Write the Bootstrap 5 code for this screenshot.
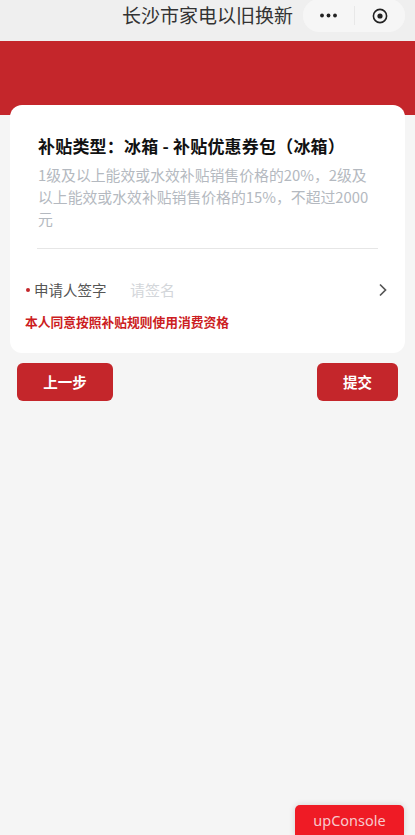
<!DOCTYPE html>
<html lang="zh">
<head>
<meta charset="utf-8">
<link href="https://cdn.jsdelivr.net/npm/bootstrap@5.3.0/dist/css/bootstrap.min.css" rel="stylesheet">
<style>
html,body{height:100%;}
body{background:#f5f5f5;font-family:"Noto Sans CJK SC","Liberation Sans",sans-serif;overflow:hidden;}
.page-wrap{height:835px;position:relative;overflow:hidden;}
.top-nav{height:41px;background:#efefef;}
.nav-title{font-size:19px;line-height:30px;color:#333;padding-left:122px;font-weight:400;white-space:nowrap;}
.capsule{width:102px;height:33px;border-radius:16px;background:#f6f6f6;margin-right:10px;margin-top:-1px;}
.capsule-half{width:50%;height:100%;}
.capsule-line{width:1px;height:19px;background:#e8e8e8;}
.hero{height:74px;background:#c4262b;}
.form-card{margin:-10px 10px 0;background:#fff;border-radius:12px;height:248px;position:relative;padding:24px 27px 0;}
.form-title{font-size:17px;line-height:34px;font-weight:700;color:#111;white-space:nowrap;padding-left:1px;letter-spacing:.2px;}
.form-desc{font-size:14.85px;line-height:22px;color:#b4b9c0;margin-top:1px;width:335px;padding-left:1px;word-break:break-all;}
.form-rule{height:1px;background:#e6e6e6;margin-top:18px;width:341px;}
.sign-row{height:29px;margin-top:26px;font-size:14.5px;line-height:29px;margin-left:-11px;margin-right:-10px;}
.req-dot{width:4px;height:4px;border-radius:50%;background:#c4262b;margin-right:4px;flex:none;}
.sign-label{color:#555;width:96px;flex:none;white-space:nowrap;}
.sign-hint{color:#d3d6da;font-size:15px;}
.agree{font-size:12.75px;line-height:20px;font-weight:700;color:#cc1d22;margin-left:-12px;margin-top:8px;white-space:nowrap;}
.act-btn{height:38px;background:#c4262b;color:#fff;border:0;border-radius:6px;font-size:14.5px;font-weight:700;padding:0;}
.act-btn:hover{background:#c4262b;color:#fff;}
.btn-prev{width:96px;}
.btn-next{width:81px;}
.btn-row{padding:10px 17px 0;}
.console-btn{position:absolute;right:11px;bottom:-1px;width:109px;height:31px;background:#ef1b25;color:#f7c9cc;border:0;border-radius:5px 5px 0 0;font-family:"Noto Sans",sans-serif;font-size:14.5px;padding:0;box-shadow:0 0 6px rgba(0,0,0,.15);}
.console-btn:hover{background:#ef1b25;color:#f7c9cc;}
</style>
</head>
<body>
<div class="page-wrap">
  <div class="top-nav d-flex align-items-start justify-content-between">
    <div class="nav-title">长沙市家电以旧换新</div>
    <div class="capsule d-flex align-items-center">
      <div class="capsule-half d-flex align-items-center justify-content-center">
        <svg width="19" height="5" viewBox="0 0 19 5"><circle cx="3" cy="2.5" r="1.9" fill="#222"/><circle cx="9.5" cy="2.5" r="1.9" fill="#222"/><circle cx="16" cy="2.5" r="1.9" fill="#222"/></svg>
      </div>
      <div class="capsule-line"></div>
      <div class="capsule-half d-flex align-items-center justify-content-center">
        <svg width="16" height="16" viewBox="0 0 16 16"><circle cx="8" cy="8" r="6.6" fill="none" stroke="#222" stroke-width="1.6"/><circle cx="8" cy="8" r="2.6" fill="#222"/></svg>
      </div>
    </div>
  </div>
  <div class="hero"></div>
  <div class="form-card">
    <div class="form-title">补贴类型：冰箱 - 补贴优惠券包（冰箱）</div>
    <div class="form-desc">1级及以上能效或水效补贴销售价格的20%，2级及以上能效或水效补贴销售价格的15%，不超过2000元</div>
    <div class="form-rule"></div>
    <div class="sign-row d-flex align-items-center">
      <span class="req-dot"></span>
      <span class="sign-label">申请人签字</span>
      <span class="sign-hint flex-grow-1">请签名</span>
      <svg width="10" height="14" viewBox="0 0 10 14"><path d="M2 1.5 7.5 7 2 12.5" fill="none" stroke="#555" stroke-width="1.7"/></svg>
    </div>
    <div class="agree">本人同意按照补贴规则使用消费资格</div>
  </div>
  <div class="btn-row d-flex justify-content-between">
    <button class="btn act-btn btn-prev" type="button">上一步</button>
    <button class="btn act-btn btn-next" type="button">提交</button>
  </div>
  <button class="btn console-btn" type="button">upConsole</button>
</div>
<script src="https://cdn.jsdelivr.net/npm/bootstrap@5.3.0/dist/js/bootstrap.bundle.min.js"></script>
</body>
</html>
